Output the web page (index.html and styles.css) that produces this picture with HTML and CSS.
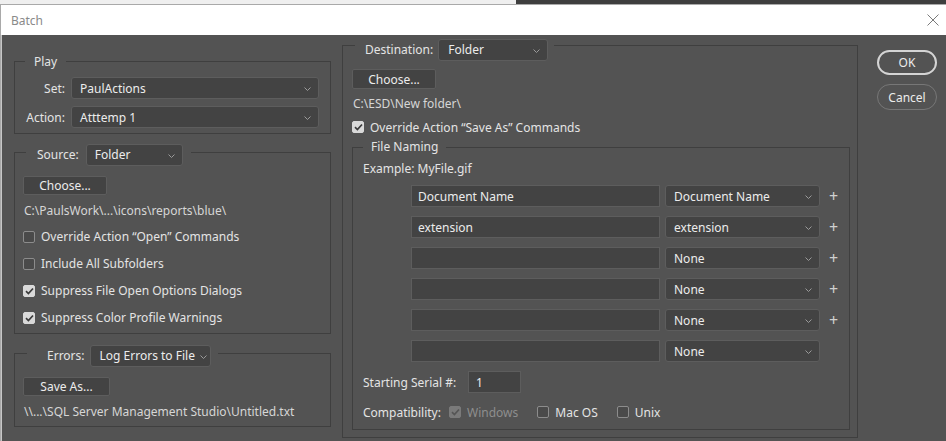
FILE: index.html
```html
<!DOCTYPE html>
<html>
<head>
<meta charset="utf-8">
<link rel="stylesheet" href="styles.css">
</head>
<body>
<div class="topstrip"><div class="ts-left"></div><div class="ts-right"></div></div>
<div class="window">
  <div class="titlebar">
    <span class="title">Batch</span>
    <svg class="close" width="12" height="12" viewBox="0 0 12 12"><path d="M0.5 0.5 L11.5 11.5 M11.5 0.5 L0.5 11.5" stroke="#7a7a7a" stroke-width="1" fill="none"/></svg>
  </div>
  <div class="body">
    <div class="col-left">
      <div class="group play">
        <div class="legend lg-play">Play</div>
        <div class="rows">
          <div class="frow"><span class="lbl">Set:</span><div class="select w-set"><span class="txt">PaulActions</span><svg class="chev" width="7" height="4" viewBox="0 0 7 4"><path d="M0.5 0.5 L3.5 3.5 L6.5 0.5" stroke="#9a9a9a" fill="none"/></svg></div></div>
          <div class="frow"><span class="lbl">Action:</span><div class="select w-set"><span class="txt">Atttemp 1</span><svg class="chev" width="7" height="4" viewBox="0 0 7 4"><path d="M0.5 0.5 L3.5 3.5 L6.5 0.5" stroke="#9a9a9a" fill="none"/></svg></div></div>
        </div>
      </div>

      <div class="group source">
        <div class="legend lg-source"><span class="lg-label">Source:</span><div class="select w-src"><span class="txt">Folder</span><svg class="chev" width="7" height="4" viewBox="0 0 7 4"><path d="M0.5 0.5 L3.5 3.5 L6.5 0.5" stroke="#9a9a9a" fill="none"/></svg></div></div>
        <div class="btn btn-choose">Choose...</div>
        <div class="path p-src">C:\PaulsWork\...\icons\reports\blue\</div>
        <div class="checks">
          <div class="chk"><span class="box"></span><span>Override Action “Open” Commands</span></div>
          <div class="chk"><span class="box"></span><span>Include All Subfolders</span></div>
          <div class="chk"><span class="box on"><svg width="9" height="8" viewBox="0 0 9 8"><path d="M1 4.2 L3.4 6.5 L8 1.5" stroke="#3a3a3a" stroke-width="1.7" fill="none"/></svg></span><span>Suppress File Open Options Dialogs</span></div>
          <div class="chk"><span class="box on"><svg width="9" height="8" viewBox="0 0 9 8"><path d="M1 4.2 L3.4 6.5 L8 1.5" stroke="#3a3a3a" stroke-width="1.7" fill="none"/></svg></span><span>Suppress Color Profile Warnings</span></div>
        </div>
      </div>

      <div class="group errors">
        <div class="legend lg-errors"><span class="lg-label">Errors:</span><div class="select w-err"><span class="txt">Log Errors to File</span><svg class="chev" width="7" height="4" viewBox="0 0 7 4"><path d="M0.5 0.5 L3.5 3.5 L6.5 0.5" stroke="#9a9a9a" fill="none"/></svg></div></div>
        <div class="btn btn-save">Save As...</div>
        <div class="path p-err">\\...\SQL Server Management Studio\Untitled.txt</div>
      </div>
    </div>

    <div class="col-right">
      <div class="group dest">
        <div class="legend lg-dest"><span class="lg-label">Destination:</span><div class="select w-dest"><span class="txt">Folder</span><svg class="chev" width="7" height="4" viewBox="0 0 7 4"><path d="M0.5 0.5 L3.5 3.5 L6.5 0.5" stroke="#9a9a9a" fill="none"/></svg></div></div>
        <div class="btn btn-dchoose">Choose...</div>
        <div class="path p-dest">C:\ESD\New folder\</div>
        <div class="chk chk-over"><span class="box on"><svg width="9" height="8" viewBox="0 0 9 8"><path d="M1 4.2 L3.4 6.5 L8 1.5" stroke="#3a3a3a" stroke-width="1.7" fill="none"/></svg></span><span>Override Action “Save As” Commands</span></div>

        <div class="group naming">
          <div class="legend lg-naming">File Naming</div>
          <div class="example">Example: MyFile.gif</div>
          <div class="nrows">
            <div class="nrow"><div class="input w-name">Document Name</div><div class="select w-nsel"><span class="txt">Document Name</span><svg class="chev" width="7" height="4" viewBox="0 0 7 4"><path d="M0.5 0.5 L3.5 3.5 L6.5 0.5" stroke="#9a9a9a" fill="none"/></svg></div><span class="plus">+</span></div>
            <div class="nrow"><div class="input w-name">extension</div><div class="select w-nsel"><span class="txt">extension</span><svg class="chev" width="7" height="4" viewBox="0 0 7 4"><path d="M0.5 0.5 L3.5 3.5 L6.5 0.5" stroke="#9a9a9a" fill="none"/></svg></div><span class="plus">+</span></div>
            <div class="nrow"><div class="input w-name"></div><div class="select w-nsel"><span class="txt">None</span><svg class="chev" width="7" height="4" viewBox="0 0 7 4"><path d="M0.5 0.5 L3.5 3.5 L6.5 0.5" stroke="#9a9a9a" fill="none"/></svg></div><span class="plus">+</span></div>
            <div class="nrow"><div class="input w-name"></div><div class="select w-nsel"><span class="txt">None</span><svg class="chev" width="7" height="4" viewBox="0 0 7 4"><path d="M0.5 0.5 L3.5 3.5 L6.5 0.5" stroke="#9a9a9a" fill="none"/></svg></div><span class="plus">+</span></div>
            <div class="nrow"><div class="input w-name"></div><div class="select w-nsel"><span class="txt">None</span><svg class="chev" width="7" height="4" viewBox="0 0 7 4"><path d="M0.5 0.5 L3.5 3.5 L6.5 0.5" stroke="#9a9a9a" fill="none"/></svg></div><span class="plus">+</span></div>
            <div class="nrow"><div class="input w-name"></div><div class="select w-nsel"><span class="txt">None</span><svg class="chev" width="7" height="4" viewBox="0 0 7 4"><path d="M0.5 0.5 L3.5 3.5 L6.5 0.5" stroke="#9a9a9a" fill="none"/></svg></div></div>
          </div>
          <div class="serial"><span class="s-lbl">Starting Serial #:</span><div class="input w-serial">1</div></div>
          <div class="compat">
            <span class="c-lbl">Compatibility:</span>
            <div class="chk disabled"><span class="box on dis"><svg width="9" height="8" viewBox="0 0 9 8"><path d="M1 4.2 L3.4 6.5 L8 1.5" stroke="#555" stroke-width="1.7" fill="none"/></svg></span><span>Windows</span></div>
            <div class="chk c-mac"><span class="box"></span><span>Mac OS</span></div>
            <div class="chk c-unix"><span class="box"></span><span>Unix</span></div>
          </div>
        </div>
      </div>
    </div>

    <div class="col-buttons">
      <div class="pill ok">OK</div>
      <div class="pill cancel">Cancel</div>
    </div>
  </div>
</div>
</body>
</html>
```

FILE: styles.css
```css
html, body {
  margin: 0;
  padding: 0;
}
body {
  width: 946px;
  height: 441px;
  overflow: hidden;
  background: #535353;
  font-family: "Noto Sans", "Open Sans", sans-serif;
  font-size: 12px;
  color: #e4e4e4;
}
.topstrip {
  display: flex;
  height: 4px;
}
.ts-left {
  width: 516px;
  background: #efefef;
}
.ts-right {
  flex: 1;
  background: #3e3e3e;
}
.window {
  border-top: 1px solid #a9a9a9;
  border-left: 1px solid #a9a9a9;
}
.titlebar {
  height: 30px;
  background: #ffffff;
  display: flex;
  align-items: center;
  justify-content: space-between;
  padding: 0 7px 0 10px;
}
.title {
  color: #8a8a8a;
  font-size: 12px;
}
.close {
  margin-top: -1px;
}
.body {
  display: flex;
  height: 406px;
  border-left: 1px solid #c7c7c7;
  padding-left: 12px;
  box-sizing: border-box;
}

/* groups */
.group {
  border: 1px solid #3f3f3f;
  display: flex;
  flex-direction: column;
  align-items: flex-start;
}
.legend {
  background: #535353;
  display: flex;
  align-items: center;
  line-height: 16px;
}
.col-left {
  width: 317px;
  padding-top: 26px;
  display: flex;
  flex-direction: column;
}
.col-left .group {
  width: 317px;
  box-sizing: border-box;
}
.lg-play {
  margin: -8px 0 0 10px;
  padding: 0 9px;
  height: 16px;
}
.rows {
  display: flex;
  flex-direction: column;
  gap: 7px;
  padding: 7px 0 5px 9px;
}
.frow {
  display: flex;
  align-items: center;
  gap: 6px;
}
.lbl {
  width: 41px;
  text-align: right;
}

.select {
  display: flex;
  align-items: center;
  height: 22px;
  box-sizing: border-box;
  background: #434343;
  border: 1px solid #5d5d5d;
  border-radius: 3px;
  padding: 0 7px 0 8px;
  color: #ececec;
}
.select .txt {
  flex: 1;
  white-space: nowrap;
}
.chev {
  flex: none;
  margin-top: 1px;
}
.w-set { width: 248px; }
.w-src { width: 97px; }
.w-err { width: 121px; padding-left: 9px; padding-right: 4px; }
.w-err .txt { margin-right: 5px; }
.w-dest { width: 110px; padding-left: 9px; }
.w-nsel { width: 155px; padding-left: 8px; }

.source { margin-top: 18px; }
.lg-source {
  margin: -9px 0 0 11px;
  padding: 0 8px 0 11px;
  height: 22px;
  gap: 7px;
}
.errors { margin-top: 19px; }
.lg-errors {
  margin: -9px 0 0 12px;
  padding: 0 7px 0 20px;
  height: 22px;
  gap: 5px;
}

.btn {
  height: 19px;
  box-sizing: border-box;
  background: #434343;
  border: 1px solid #5d5d5d;
  border-radius: 2px;
  display: flex;
  align-items: center;
  justify-content: center;
  color: #ececec;
}
.btn-choose {
  width: 84px;
  margin: 10px 0 0 8px;
}
.btn-save {
  width: 87px;
  margin: 10px 0 0 8px;
}
.path {
  line-height: 16px;
  color: #d6d6d6;
  white-space: nowrap;
}
.p-src { margin: 8px 0 0 9px; }
.p-err { margin: 8px 0 6px 9px; }

.checks {
  display: flex;
  flex-direction: column;
  margin: 4px 0 2px 8px;
}
.checks .chk {
  height: 27px;
}
.chk {
  display: flex;
  align-items: center;
  gap: 6px;
  white-space: nowrap;
}
.box {
  width: 12px;
  height: 12px;
  box-sizing: border-box;
  border: 1px solid #8c8c8c;
  border-radius: 2px;
  background: #4a4a4a;
  display: flex;
  align-items: center;
  justify-content: center;
  flex: none;
}
.box.on {
  background: #d9d9d9;
  border-color: #d9d9d9;
}
.box.dis {
  background: #7a7a7a;
  border-color: #7a7a7a;
}
.chk.disabled {
  color: #8e8e8e;
}

/* right column */
.col-right {
  margin-left: 11px;
  padding-top: 10px;
}
.dest {
  width: 516px;
  height: 393px;
  box-sizing: border-box;
}
.lg-dest {
  margin: -7px 0 0 12px;
  padding: 0 6px 0 10px;
  height: 22px;
  gap: 5px;
}
.btn-dchoose {
  width: 84px;
  height: 20px;
  margin: 8px 0 0 9px;
}
.p-dest { margin: 7px 0 0 10px; }
.chk-over {
  height: 16px;
  margin: 7px 0 0 9px;
}
.naming {
  margin: 12px 0 0 9px;
  width: 498px;
  height: 283px;
  box-sizing: border-box;
}
.lg-naming {
  margin: -9px 0 0 10px;
  padding: 0 8px;
  height: 16px;
}
.example {
  line-height: 16px;
  margin: 6px 0 0 10px;
}
.nrows {
  display: flex;
  flex-direction: column;
  gap: 9px;
  margin: 8px 0 0 58px;
}
.nrow {
  display: flex;
  align-items: center;
  height: 22px;
}
.input {
  height: 22px;
  box-sizing: border-box;
  background: #434343;
  border: 1px solid #5d5d5d;
  display: flex;
  align-items: center;
  padding-left: 6px;
  color: #ececec;
}
.w-name {
  width: 249px;
  margin-right: 5px;
}
.plus {
  margin-left: 9px;
  color: #d0d0d0;
  font-size: 16px;
  line-height: 16px;
}
.serial {
  display: flex;
  align-items: center;
  margin: 9px 0 0 10px;
}
.s-lbl {
  width: 105px;
}
.w-serial {
  width: 53px;
  padding-left: 7px;
}
.compat {
  display: flex;
  align-items: center;
  height: 16px;
  margin: 11px 0 0 10px;
}
.c-lbl {
  width: 86px;
}
.c-mac { margin-left: 19px; }
.c-unix { margin-left: 19px; }

/* buttons */
.col-buttons {
  margin-left: 19px;
  padding-top: 15px;
  display: flex;
  flex-direction: column;
}
.pill {
  width: 60px;
  height: 25px;
  box-sizing: border-box;
  border-radius: 13px;
  display: flex;
  align-items: center;
  justify-content: center;
  color: #ececec;
  font-size: 12px;
}
.ok {
  border: 2px solid #d4d4d4;
}
.cancel {
  margin-top: 9px;
  height: 26px;
  border: 1px solid #777777;
}
```
